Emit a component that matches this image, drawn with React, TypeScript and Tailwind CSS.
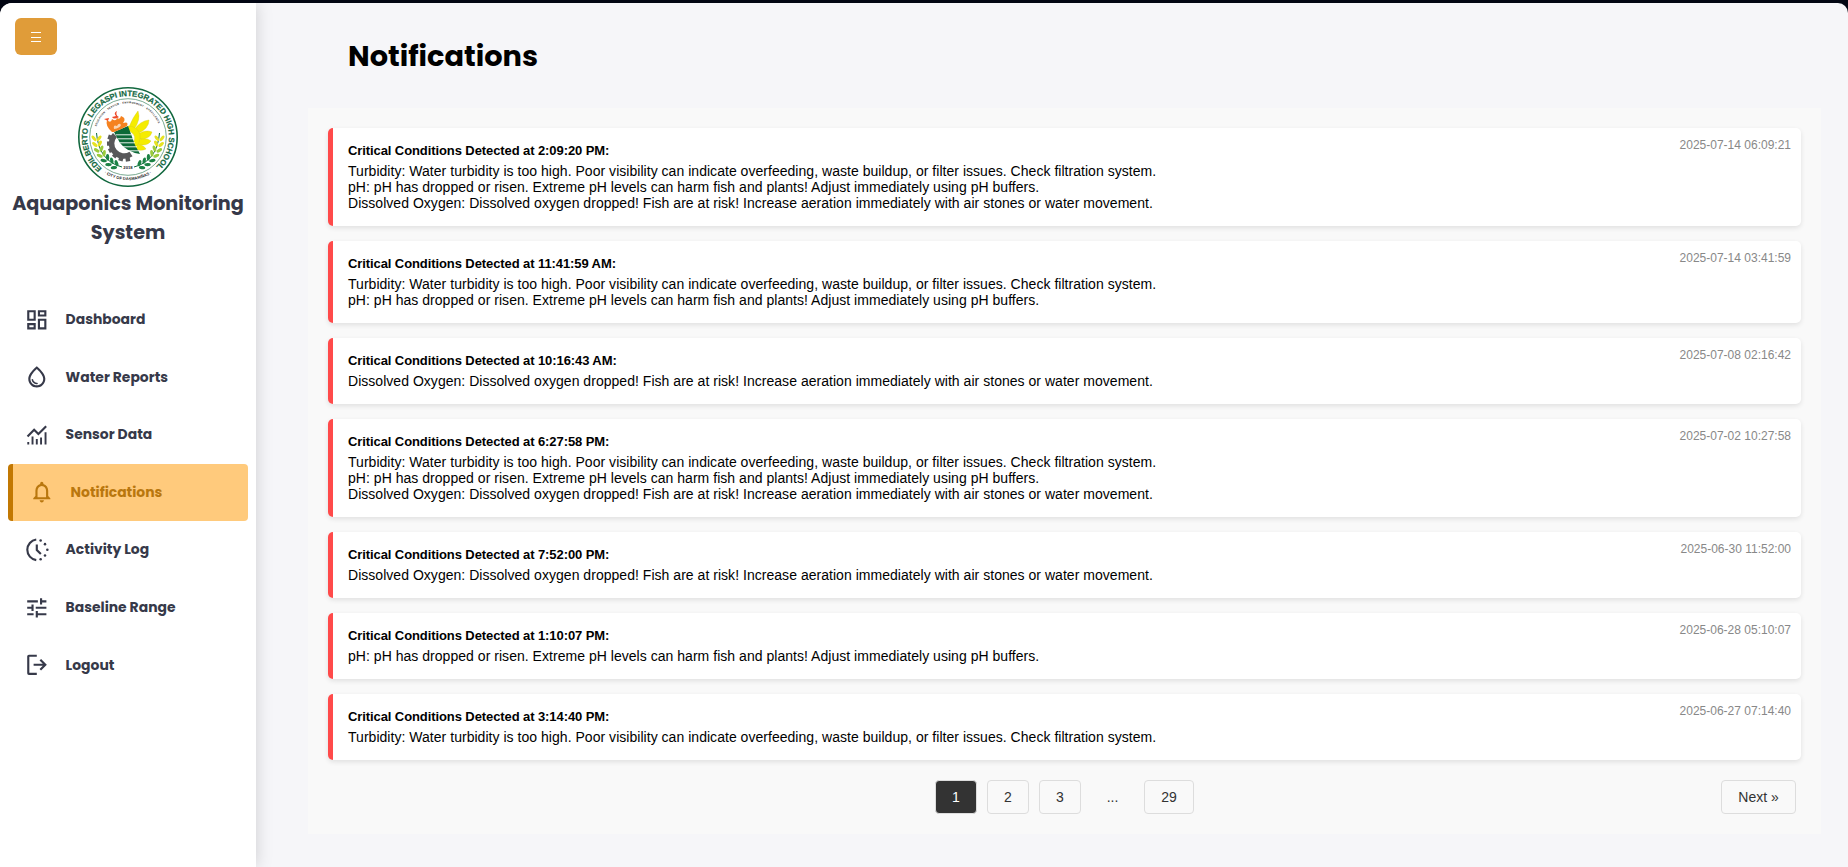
import React from "react";
import { MdOutlineDashboard, MdOutlineWaterDrop, MdOutlineNotifications, MdTune } from "react-icons/md";

const TURB = "Turbidity: Water turbidity is too high. Poor visibility can indicate overfeeding, waste buildup, or filter issues. Check filtration system.";
const PH = "pH: pH has dropped or risen. Extreme pH levels can harm fish and plants! Adjust immediately using pH buffers.";
const OXY = "Dissolved Oxygen: Dissolved oxygen dropped! Fish are at risk! Increase aeration immediately with air stones or water movement.";

const notices = [
  { at: "2:09:20 PM", stamp: "2025-07-14 06:09:21", lines: [TURB, PH, OXY] },
  { at: "11:41:59 AM", stamp: "2025-07-14 03:41:59", lines: [TURB, PH] },
  { at: "10:16:43 AM", stamp: "2025-07-08 02:16:42", lines: [OXY] },
  { at: "6:27:58 PM", stamp: "2025-07-02 10:27:58", lines: [TURB, PH, OXY] },
  { at: "7:52:00 PM", stamp: "2025-06-30 11:52:00", lines: [OXY] },
  { at: "1:10:07 PM", stamp: "2025-06-28 05:10:07", lines: [PH] },
  { at: "3:14:40 PM", stamp: "2025-06-27 07:14:40", lines: [TURB] },
];

function Monitoring() {
  return (
    <svg className="size-[25.6px]" viewBox="0 0 24 24" fill="none" stroke="currentColor" strokeWidth="1.8">
      <path d="M4 21v-2.200M8 21v-7.500M12 21v-5M16 21v-6.500M20.200 21V9.500" />
      <path d="M3.300 13.500L9.500 7.300l4 4L20.800 4" strokeWidth="2" />
    </svg>
  );
}

function Timelapse() {
  return (
    <svg className="size-[25.6px] overflow-visible" viewBox="0 0 24 24" fill="none" stroke="currentColor" strokeWidth="2">
      <path d="M11.500 2.300A9.800 9.800 0 0 0 11.500 21.700" />
      <path d="M12 7v5.200l3.800 3.800" />
      <g fill="currentColor" stroke="none">
        <circle cx="15.600" cy="3.200" r="1.200" />
        <circle cx="19.700" cy="6.700" r="1.200" />
        <circle cx="21.900" cy="12" r="1.200" />
        <circle cx="19.700" cy="17.300" r="1.200" />
        <circle cx="15.600" cy="20.900" r="1.200" />
      </g>
    </svg>
  );
}

function Exit() {
  return (
    <svg className="size-[25.6px]" viewBox="0 0 24 24" fill="none" stroke="currentColor" strokeWidth="2">
      <path d="M12 3.500H4.600Q4 3.500 4 4.100v15.800Q4 20.500 4.600 20.500H12" />
      <path d="M9 12h10.500M15.300 7.300L20 12l-4.700 4.700" />
    </svg>
  );
}

const nav = [
  { label: "Dashboard", icon: <MdOutlineDashboard className="size-[25.6px]" /> },
  { label: "Water Reports", icon: <MdOutlineWaterDrop className="size-[25.6px]" /> },
  { label: "Sensor Data", icon: <Monitoring /> },
  { label: "Notifications", icon: <MdOutlineNotifications className="size-[25.6px]" />, active: true },
  { label: "Activity Log", icon: <Timelapse /> },
  { label: "Baseline Range", icon: <MdTune className="size-[25.6px]" /> },
  { label: "Logout", icon: <Exit /> },
];

function Laurel() {
  return (
    <g>
      <path d="M18.500 46C20 64 28 76 44 80" fill="none" stroke="#0b6b3a" strokeWidth="1" />
      {[0, 1, 2, 3, 4, 5, 6].map((i) => {
        const a = Math.PI - 0.02 - i * 0.185;
        const x = 50 + 31.5 * Math.cos(a);
        const y = 50 + 31 * Math.sin(a);
        const color = i < 2 ? "#e6e322" : i < 4 ? "#9acb3c" : "#1c8245";
        return (
          <g key={i} fill={color} transform={`translate(${x} ${y}) rotate(${-i * 10})`}>
            <ellipse cx="-2.500" cy="-1" rx="1.600" ry="3.200" transform="rotate(-38)" />
            <ellipse cx="2.500" cy="-1" rx="1.600" ry="3.200" transform="rotate(38)" />
          </g>
        );
      })}
    </g>
  );
}

function Seal() {
  return (
    <svg className="size-[100px]" viewBox="0 0 100 100" fontFamily="Liberation Sans, sans-serif" fontWeight="bold">
      <defs>
        <path id="ringName" d="M24 81.400A40.800 40.800 0 1 1 76 81.400" />
        <path id="ringMotto" d="M18.500 39.500A33 33 0 0 1 81.500 39.500" />
        <path id="ringCity" d="M25.500 85.500A43 43 0 0 0 74.500 85.500" />
      </defs>
      <circle cx="50" cy="50" r="49.200" fill="#fff" stroke="#12683f" strokeWidth="1.600" />
      <circle cx="50" cy="50" r="38.300" fill="none" stroke="#3f8562" strokeWidth="0.700" />
      <text fontSize="7.800" fill="#12683f" stroke="#12683f" strokeWidth="0.200">
        <textPath href="#ringName" textLength="197">EDILBERTO S. LEGASPI INTEGRATED HIGH SCHOOL</textPath>
      </text>
      <text fontSize="2.500" fill="#222"><textPath href="#ringMotto" textLength="80">EDUCATION · SERVICE · ENVIRONMENT · EXCELLENCE</textPath></text>
      <text fontSize="4" fill="#222"><textPath href="#ringCity" startOffset="1" textLength="50">· CITY OF DASMARIÑAS ·</textPath></text>
      <Laurel />
      <g transform="translate(100 0) scale(-1 1)"><Laurel /></g>
      <path d="M37 48A12.500 12.500 0 0 0 53 67" fill="none" stroke="#58585a" strokeWidth="5.500" />
      <g fill="#58585a">
        {[82, 106, 130, 154, 178, 200].map((a) => (
          <rect key={a} x="61" y="53.800" width="5" height="4.400" transform={`rotate(${a} 47.500 56)`} />
        ))}
      </g>
      <g fill="#f5ec00" stroke="#d5c91c" strokeWidth="0.400">
        <path d="M51 40Q55 30 60 24Q63 33 56 42Z" />
        <path d="M56 43Q62 34 71 33Q71 42 59 47Z" />
        <path d="M59 48Q67 42 74 45Q72 53 60 52Z" />
        <path d="M60 53Q68 50 73 54Q69 60 58 57Z" />
        <path d="M57 57Q65 57 68 62Q62 65 56 61Z" />
        <path d="M50 39Q59 39 62 47Q63 57 56 61L54 57Q61 49 50 43Z" />
      </g>
      <path d="M36 45L50 39L57 58L62 67Q49 65 42 56Z" fill="#0c6938" />
      <path d="M38 47.800h15M40 51.800h15.500M41.500 55.800h15.500M45 59.800h14M50 63.800h10" stroke="#fff" strokeWidth="0.900" />
      <path d="M34 45Q27 39 29 33Q33 37 34 32Q38 35 39 31Q42 33 43 29Q49 31 45 36Q51 34 49 39Q44 42 36 45Z" fill="#f58220" />
      <path d="M36 42Q35 37 39 39Q41 35 43 38Q42 41 36 42Z" fill="#fbd3ae" />
      <path d="M38 29Q35 26 39 24Q37 28 41 30Q36 33 34 30ZM30 34L26 32L31 31Z" fill="#ee4b2b" />
      <text x="50" y="81.500" fontSize="4.200" textAnchor="middle" fill="#222">2018</text>
    </svg>
  );
}

const pageBtn = "flex h-[34px] items-center justify-center rounded-[4px] border border-[#ddd] text-[14px] text-[#333]";

export default function App() {
  return (
    <div className="h-[867px] w-full overflow-hidden bg-[#020613] pt-[3px] font-['Liberation_Sans',Arial,sans-serif] text-black">
      <div className="flex h-full overflow-hidden rounded-tl-[12px] rounded-tr-[10px] bg-[#f6f6f9]">
        <aside className="z-10 flex w-64 shrink-0 flex-col bg-white font-['Poppins',sans-serif] shadow-[0_0_16px_rgba(0,0,0,0.17)]">
          <button className="mt-[15px] ml-[15px] flex h-[37px] w-[42px] items-center justify-center rounded-[6px] bg-[#e09c39] text-white">
            <svg width="12" height="12" viewBox="0 0 12 12" stroke="currentColor" strokeWidth="1"><path d="M1 1.500h10M1 6.500h10M1 10.500h10" /></svg>
          </button>
          <div className="mt-8 flex flex-col items-center text-center">
            <Seal />
            <h2 className="mt-0.5 w-full text-[19.2px] leading-[29px] font-bold whitespace-nowrap text-[#363949]">Aquaponics Monitoring<br />System</h2>
          </div>
          <nav className="mt-11 flex flex-col gap-[0.6px] px-2">
            {nav.map((n) => (
              <a key={n.label} className={n.active
                ? "flex h-[57px] items-center gap-4 rounded-[4px] border-l-[5px] border-[#c27803] bg-[#ffca7c] pl-4 text-[#b9770e]"
                : "flex h-[57px] items-center gap-4 pl-4 text-[#363949]"}>
                {n.icon}
                <span className="text-[13.92px] font-bold">{n.label}</span>
              </a>
            ))}
          </nav>
        </aside>
        <main className="flex flex-1 flex-col pr-[27px] pl-[52px]">
          <h1 className="mt-[29px] ml-10 h-[76px] font-['Poppins',sans-serif] text-[28.8px] leading-[48px] font-bold">Notifications</h1>
          <section className="flex h-[726px] flex-col bg-[#f9f9f9] p-5">
            <div className="flex flex-col gap-[15px]">
              {notices.map((n) => (
                <article key={n.stamp} className="flex justify-between rounded-[5px] border-l-[5px] border-[#ff4a4a] bg-white pt-[14px] pr-[10px] pb-[15px] pl-[15px] shadow-[0_2px_5px_rgba(0,0,0,0.1)]">
                  <div>
                    <strong className="block h-[21px] text-[13px] leading-[17px] tracking-[-0.09px]">Critical Conditions Detected at {n.at}:</strong>
                    {n.lines.map((l) => <p key={l} className="text-[14px] leading-4 tracking-[0.033px]">{l}</p>)}
                  </div>
                  <time className="-mt-1 h-3.5 text-[12px] leading-[14px] text-[#888]">{n.stamp}</time>
                </article>
              ))}
            </div>
            <div className="mt-5 grid grid-cols-[1fr_auto_1fr] items-center px-[5px]">
              <span />
              <div className="flex gap-2.5">
                <span className={`${pageBtn} w-[42px] bg-[#333] !text-white`}>1</span>
                <span className={`${pageBtn} w-[42px]`}>2</span>
                <span className={`${pageBtn} w-[42px]`}>3</span>
                <span className="flex h-[34px] w-[43px] items-center justify-center text-[14px] text-[#333]">...</span>
                <span className={`${pageBtn} w-[50px]`}>29</span>
              </div>
              <span className={`${pageBtn} w-[75px] justify-self-end`}>Next »</span>
            </div>
          </section>
        </main>
      </div>
    </div>
  );
}
